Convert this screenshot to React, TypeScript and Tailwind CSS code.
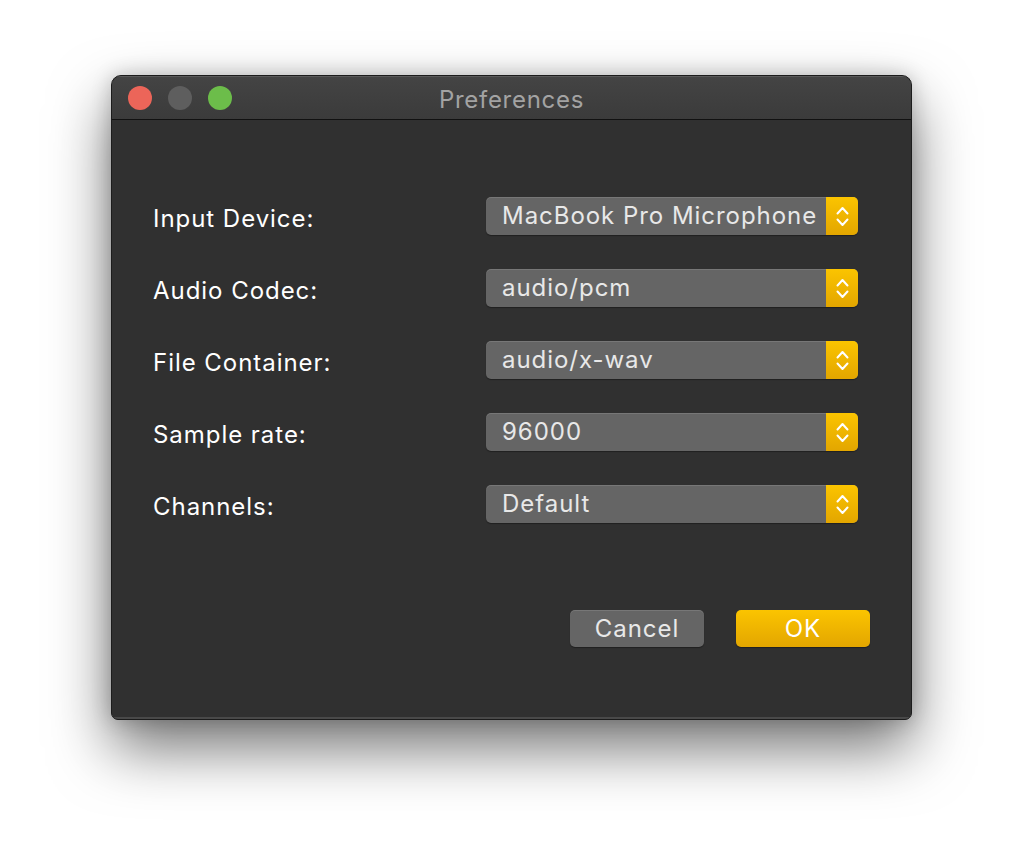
const rows = [
  { label: "Input Device:", value: "MacBook Pro Microphone" },
  { label: "Audio Codec:", value: "audio/pcm" },
  { label: "File Container:", value: "audio/x-wav" },
  { label: "Sample rate:", value: "96000" },
  { label: "Channels:", value: "Default" },
];

function Stepper() {
  return (
    <svg width="13" height="21" viewBox="0 0 13 21" fill="none" stroke="white" strokeWidth="2" strokeLinecap="round" strokeLinejoin="round">
      <polyline points="1.5,7.5 6.5,2 11.5,7.5" />
      <polyline points="1.5,13.5 6.5,19 11.5,13.5" />
    </svg>
  );
}

function PopUp({ value }: { value: string }) {
  return (
    <div className="flex h-[38px] w-[372px] rounded-[5px] bg-[#656565] shadow-[inset_0_1px_0_rgba(255,255,255,0.12),0_1px_1px_rgba(0,0,0,0.35)]">
      <div className="flex-1 flex items-center pl-4 text-[24px] tracking-[0.04em] text-[#e8e8e8] leading-none">{value}</div>
      <div className="w-8 flex items-center justify-center rounded-r-[5px] bg-gradient-to-b from-[#fbc400] to-[#e3a600]">
        <Stepper />
      </div>
    </div>
  );
}

export default function App() {
  return (
    <div
      className="w-[1024px] h-[868px] bg-white pt-[75px] pl-[111px] overflow-hidden"
      style={{ fontFamily: "Inter, 'Noto Sans', sans-serif" }}
    >
      <div className="w-[801px] h-[645px] rounded-t-[10px] rounded-b-[7px] border border-[#1c1c1c] bg-[#303030] shadow-[0_28px_60px_rgba(0,0,0,0.55),0_0_20px_rgba(0,0,0,0.2)] flex flex-col overflow-hidden">
        {/* Title bar */}
        <div className="relative h-[44px] shrink-0 bg-gradient-to-b from-[#444444] to-[#3b3b3b] border-b border-[#111] flex items-center justify-center shadow-[inset_0_1px_0_rgba(255,255,255,0.12)]">
          <div className="absolute left-[16px] top-[10px] flex gap-4">
            <span className="w-6 h-6 rounded-full bg-[#ec6559]" />
            <span className="w-6 h-6 rounded-full bg-[#5e5e5e]" />
            <span className="w-6 h-6 rounded-full bg-[#6cbd4a]" />
          </div>
          <span className="text-[24px] tracking-[0.03em] text-[#a3a3a3] leading-none mt-[4px]">Preferences</span>
        </div>

        {/* Body */}
        <div className="flex-1 flex flex-col px-[41px] pt-[77px] shadow-[inset_0_-2px_0_rgba(255,255,255,0.12)]">
          <div className="flex flex-col gap-[34px]">
            {rows.map((r) => (
              <div key={r.label} className="flex items-center justify-between pr-[12px]">
                <span className="text-[24px] tracking-[0.04em] text-white leading-none mt-[6px]">{r.label}</span>
                <PopUp value={r.value} />
              </div>
            ))}
          </div>

          <div className="flex justify-end gap-8 mt-[87px]">
            <button className="w-[134px] h-[37px] rounded-[5px] bg-[#656565] text-[24px] tracking-[0.04em] text-[#e8e8e8] leading-none shadow-[inset_0_1px_0_rgba(255,255,255,0.12),0_1px_1px_rgba(0,0,0,0.35)]">
              Cancel
            </button>
            <button className="w-[134px] h-[37px] rounded-[5px] bg-gradient-to-b from-[#fbc400] to-[#e3a600] text-[24px] tracking-[0.04em] text-white leading-none shadow-[0_1px_1px_rgba(0,0,0,0.35)]">
              OK
            </button>
          </div>
        </div>
      </div>
    </div>
  );
}
